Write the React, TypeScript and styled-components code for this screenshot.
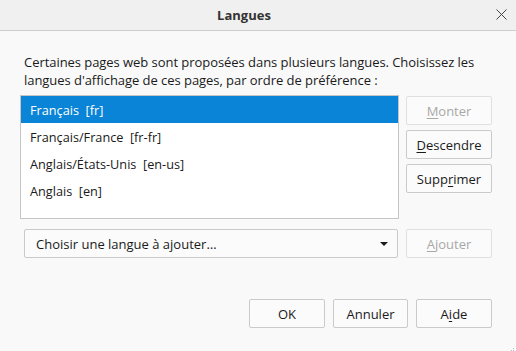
import React from "react";
import styled, { createGlobalStyle } from "styled-components";

const Global = createGlobalStyle`
  html, body { margin: 0; padding: 0; background: #f9f9f9; }
  body { font-family: "Open Sans", "Noto Sans", sans-serif; font-size: 13px; color: #1a1a1a; }
`;

const Window = styled.div`
  width: 516px;
  height: 351px;
  display: flex;
  flex-direction: column;
  background: #f9f9f9;
  position: relative;
  overflow: hidden;
`;

const TitleBar = styled.div`
  height: 30px;
  flex: none;
  display: flex;
  align-items: center;
  justify-content: center;
  background: #f0f0f0;
  border-bottom: 1px solid #cfcfcf;
  position: relative;
`;

const Title = styled.div`
  font-weight: 700;
  font-size: 13px;
  color: #333;
  margin-right: 28px;
`;

const Close = styled.div`
  position: absolute;
  right: 9px;
  top: 9px;
  width: 11px;
  height: 11px;
  display: flex;
`;

const Content = styled.div`
  flex: 1;
  display: flex;
  flex-direction: column;
  padding: 22px 24px 0 20px;
`;

const Description = styled.p`
  margin: 0 0 6px 4px;
  line-height: 18px;
  font-size: 13px;
  letter-spacing: -0.05px;
`;

const ListRow = styled.div`
  display: flex;
  gap: 7px;
  align-items: flex-start;
`;

const ListBox = styled.div`
  width: 377px;
  height: 122px;
  background: #fff;
  border: 1px solid #c5c5c5;
  display: flex;
  flex-direction: column;
`;

const Item = styled.div<{ $selected?: boolean }>`
  height: 27px;
  display: flex;
  align-items: center;
  padding-left: 9px;
  font-size: 12.7px;
  background: ${(p) => (p.$selected ? "#0a84d6" : "transparent")};
  color: ${(p) => (p.$selected ? "#fff" : "#1a1a1a")};
  white-space: pre;
`;

const SideColumn = styled.div`
  display: flex;
  flex-direction: column;
  gap: 5px;
  margin-top: 1px;
`;

const Button = styled.button<{ $width?: number; $disabled?: boolean }>`
  width: ${(p) => p.$width ?? 86}px;
  height: 29px;
  box-sizing: border-box;
  background: #fbfbfb;
  border: 1px solid ${(p) => (p.$disabled ? "#e0e0e0" : "#cacaca")};
  border-radius: 2px;
  font-family: inherit;
  font-size: 13px;
  color: ${(p) => (p.$disabled ? "#a8a8a8" : "#1a1a1a")};
  padding: 0;
  display: flex;
  align-items: center;
  justify-content: center;
  cursor: default;
`;

const Key = styled.span`
  text-decoration: underline;
  text-underline-offset: 2px;
`;

const AddRow = styled.div`
  display: flex;
  gap: 8px;
  margin-top: 10px;
  margin-left: 4px;
`;

const Select = styled.div`
  width: 374px;
  height: 29px;
  box-sizing: border-box;
  background: #fbfbfb;
  border: 1px solid #cacaca;
  border-radius: 2px;
  display: flex;
  align-items: center;
  justify-content: space-between;
  padding: 0 9px 0 11px;
`;

const Arrow = styled.div`
  width: 0;
  height: 0;
  border-left: 4px solid transparent;
  border-right: 4px solid transparent;
  border-top: 4px solid #1a1a1a;
`;

const Footer = styled.div`
  display: flex;
  justify-content: flex-end;
  gap: 8px;
  margin-top: 41px;
`;

const Grip = styled.div`
  position: absolute;
  right: 1px;
  bottom: 1px;
  width: 8px;
  height: 8px;
`;

export default function App() {
  return (
    <>
      <Global />
      <Window>
        <TitleBar>
          <Title>Langues</Title>
          <Close>
            <svg width="11" height="11" viewBox="0 0 11 11">
              <path d="M0.5 0.5L10.5 10.5M10.5 0.5L0.5 10.5" stroke="#444" strokeWidth="1" />
            </svg>
          </Close>
        </TitleBar>
        <Content>
          <Description>
            Certaines pages web sont proposées dans plusieurs langues. Choisissez les
            <br />
            langues d'affichage de ces pages, par ordre de préférence :
          </Description>
          <ListRow>
            <ListBox>
              <Item $selected>{"Français  [fr]"}</Item>
              <Item>{"Français/France  [fr-fr]"}</Item>
              <Item>{"Anglais/États-Unis  [en-us]"}</Item>
              <Item>{"Anglais  [en]"}</Item>
            </ListBox>
            <SideColumn>
              <Button $disabled>
                <Key>M</Key>onter
              </Button>
              <Button>
                <Key>D</Key>escendre
              </Button>
              <Button>
                Supp<Key>r</Key>imer
              </Button>
            </SideColumn>
          </ListRow>
          <AddRow>
            <Select>
              <span>Choisir une langue à ajouter…</span>
              <Arrow />
            </Select>
            <Button $disabled>
              <Key>A</Key>jouter
            </Button>
          </AddRow>
          <Footer>
            <Button $width={76}>OK</Button>
            <Button $width={75}>Annuler</Button>
            <Button $width={76}>
              A<Key>i</Key>de
            </Button>
          </Footer>
        </Content>
        <Grip>
          <svg width="8" height="8" viewBox="0 0 8 8">
            {[
              [6, 0],
              [4, 2],
              [6, 2],
              [2, 4],
              [4, 4],
              [6, 4],
              [0, 6],
              [2, 6],
              [4, 6],
              [6, 6],
            ].map(([x, y], i) => (
              <rect key={i} x={x} y={y} width="1" height="1" fill="#bbb" />
            ))}
          </svg>
        </Grip>
      </Window>
    </>
  );
}
